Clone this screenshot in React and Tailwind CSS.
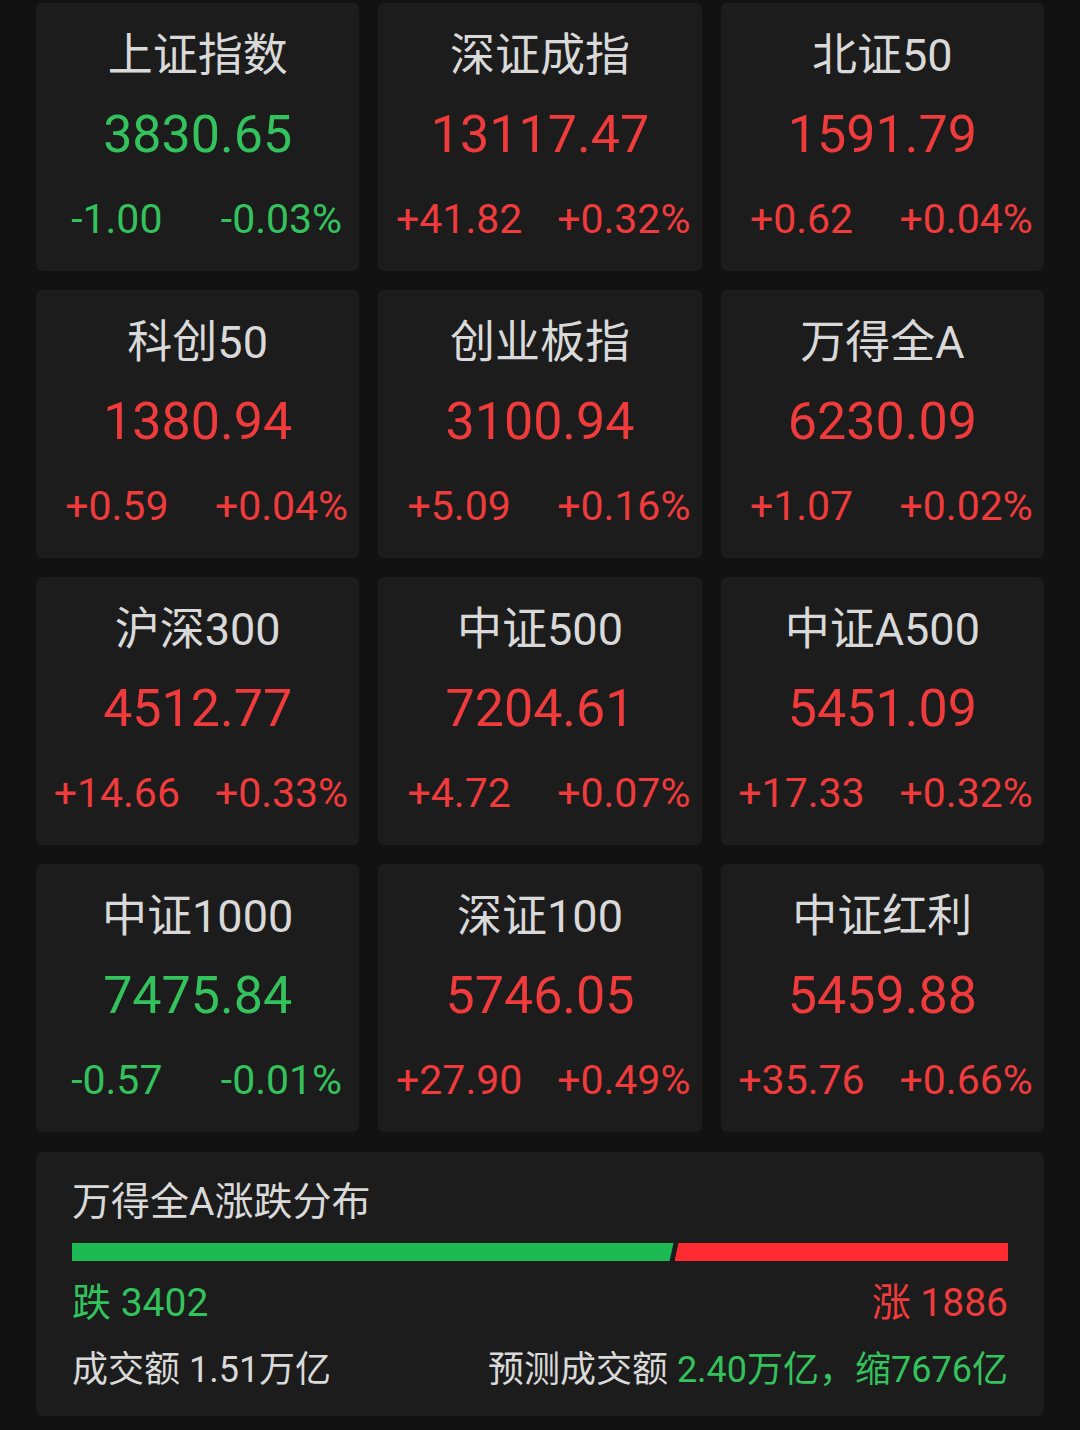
import React from 'react'

const indices = [
    { name: '上证指数', value: '3830.65', chg: '-1.00', pct: '-0.03%' },
    { name: '深证成指', value: '13117.47', chg: '+41.82', pct: '+0.32%' },
    { name: '北证50', value: '1591.79', chg: '+0.62', pct: '+0.04%' },
    { name: '科创50', value: '1380.94', chg: '+0.59', pct: '+0.04%' },
    { name: '创业板指', value: '3100.94', chg: '+5.09', pct: '+0.16%' },
    { name: '万得全A', value: '6230.09', chg: '+1.07', pct: '+0.02%' },
    { name: '沪深300', value: '4512.77', chg: '+14.66', pct: '+0.33%' },
    { name: '中证500', value: '7204.61', chg: '+4.72', pct: '+0.07%' },
    { name: '中证A500', value: '5451.09', chg: '+17.33', pct: '+0.32%' },
    { name: '中证1000', value: '7475.84', chg: '-0.57', pct: '-0.01%' },
    { name: '深证100', value: '5746.05', chg: '+27.90', pct: '+0.49%' },
    { name: '中证红利', value: '5459.88', chg: '+35.76', pct: '+0.66%' },
]

const IndexCard = ({ item }) => {
    const down = item.chg.startsWith('-')
    const color = down ? 'text-[#34c25c]' : 'text-[#ef3b3b]'

    return (
        <div className="h-[268px] rounded-[6px] bg-[#1c1c1c] flex flex-col items-center pt-[28px]">
            <div className="text-[45px] leading-[50px] text-[#d9d9d9]">{item.name}</div>
            <div className={`mt-[24px] text-[52px] leading-[60px] ${color}`}>{item.value}</div>
            <div className={`mt-[30px] w-full grid grid-cols-2 text-[41px] leading-[48px] ${color}`}>
                <span className="text-center">{item.chg}</span>
                <span className="text-center pl-[6px]">{item.pct}</span>
            </div>
        </div>
    )
}

const App = () => {
    return (
        <div className="min-h-[1430px] w-[1080px] bg-[#121212] px-[36px] pt-[3px] font-['Roboto','Noto_Sans_CJK_SC',sans-serif]">
            <div className="grid grid-cols-3 gap-x-[19px] gap-y-[19px]">
                {indices.map((item) => (
                    <IndexCard key={item.name} item={item} />
                ))}
            </div>

            {/* 涨跌分布 */}
            <div className="mt-[20px] h-[264px] rounded-[6px] bg-[#1c1c1c] px-[36px] pt-[27px]">
                <div className="text-[39px] leading-[46px] text-[#d9d9d9]">万得全A涨跌分布</div>
                <div className="mt-[18px] h-[18px] flex gap-[1px]">
                    <div className="flex-[3402] bg-[#1dba54] [clip-path:polygon(0_0,100%_0,calc(100%_-_4px)_100%,0_100%)]" />
                    <div className="flex-[1886] bg-[#ff2b30] [clip-path:polygon(4px_0,100%_0,100%_100%,0_100%)]" />
                </div>
                <div className="mt-[19px] flex justify-between text-[39px] leading-[46px]">
                    <span className="text-[#34c25c]">跌 3402</span>
                    <span className="text-[#ef3b3b]">涨 1886</span>
                </div>
                <div className="mt-[22px] flex justify-between text-[36px] leading-[44px] text-[#d9d9d9]">
                    <span>成交额 1.51万亿</span>
                    <span>
                        预测成交额 <span className="text-[#34c25c]">2.40万亿，缩7676亿</span>
                    </span>
                </div>
            </div>
        </div>
    )
}

export default App
